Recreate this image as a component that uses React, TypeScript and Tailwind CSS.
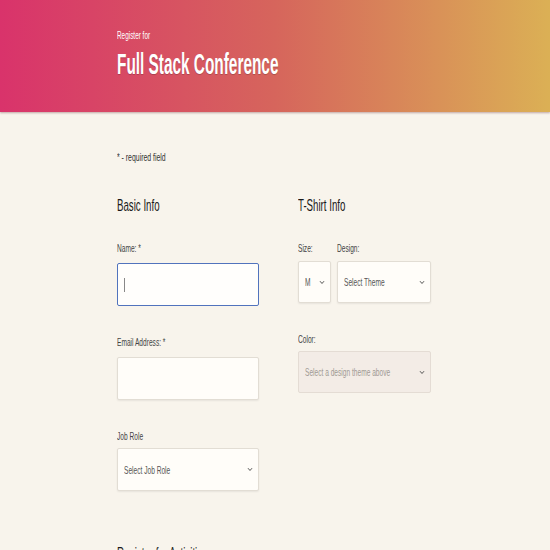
import React from "react";

const font = { fontFamily: '"Liberation Sans", Arial, sans-serif' };

// no condensed face installed, so squeeze Liberation Sans horizontally
const T = ({ children, s = "scale-x-[0.6]" }: { children: React.ReactNode; s?: string }) => (
  <span className={`inline-block origin-left whitespace-nowrap ${s}`}>{children}</span>
);

const Chevron = () => (
  <svg width="6" height="5" viewBox="0 0 6 5" className="shrink-0">
    <path d="M1 1.2l2 2.3 2-2.3" fill="none" stroke="#555" strokeWidth="1" />
  </svg>
);

const Label = ({ children, mb }: { children: React.ReactNode; mb: string }) => (
  <div className={`h-[12px] text-[11px] leading-[12px] text-[#444] ${mb}`}>
    <T>{children}</T>
  </div>
);

const Select = ({ text, w, disabled }: { text: string; w: string; disabled?: boolean }) => (
  <div
    className={`${w} h-[42px] flex items-center pl-[6px] pr-[5px] border rounded-[2px] ${
      disabled
        ? "bg-[#f3ece6] border-[#e4dcd4] text-[#a09a94]"
        : "bg-[#fffdf9] border-[#e2ddd4] text-[#555] shadow-[0_1px_2px_rgba(0,0,0,0.07)]"
    }`}
  >
    <div className="flex-1 min-w-0 text-[11px] leading-[12px]">
      <T>{text}</T>
    </div>
    <Chevron />
  </div>
);

export default function App() {
  return (
    <div className="min-h-[550px] bg-[#f8f4ec]" style={font}>
      <header className="h-[112px] bg-[linear-gradient(90deg,#d9336b,#d6655c_50%,#dbb055)] shadow-[0_1px_2px_rgba(90,20,30,0.35)]">
        <div className="w-[316px] mx-auto pt-[30px] text-white">
          <div className="text-[10px] leading-[12px]">
            <T s="scale-x-[0.64]">Register for</T>
          </div>
          <h1 className="text-[29px] leading-[34px] font-bold mt-[5px] [text-shadow:0_1px_1px_rgba(0,0,0,0.2)]">
            <T s="scale-x-[0.53]">Full Stack Conference</T>
          </h1>
        </div>
      </header>
      <main className="w-[316px] mx-auto pt-[40px]">
        <p className="h-[12px] text-[10px] leading-[12px] text-[#333]">
          <T s="scale-x-[0.69]">* - required field</T>
        </p>
        <div className="grid grid-cols-[142px_133px] gap-x-[39px] mt-[32px]">
          <section>
            <h2 className="h-[20px] text-[17px] leading-[20px] text-[#1a1a1a] mb-[26px]">
              <T s="scale-x-[0.57]">Basic Info</T>
            </h2>
            <Label mb="mb-[9px]">Name: *</Label>
            <div className="w-[142px] h-[43px] border border-[#5173bd] rounded-[2px] bg-[#fffefc] flex items-center pl-[6px]">
              <span className="w-px h-[14px] bg-[#888]" />
            </div>
            <div className="mt-[30px]">
              <Label mb="mb-[9px]">Email Address: *</Label>
              <div className="w-[142px] h-[43px] border border-[#e2ddd4] rounded-[2px] bg-[#fffdf9] shadow-[0_1px_2px_rgba(0,0,0,0.07)]" />
            </div>
            <div className="mt-[30px]">
              <Label mb="mb-[6px]">Job Role</Label>
              <Select text="Select Job Role" w="w-[142px] h-[43px]" />
            </div>
            <h2 className="h-[20px] text-[17px] leading-[20px] text-[#1a1a1a] mt-[53px]">
              <T s="scale-x-[0.57]">Register for Activities</T>
            </h2>
          </section>
          <section>
            <h2 className="h-[20px] text-[17px] leading-[20px] text-[#1a1a1a] mb-[26px]">
              <T s="scale-x-[0.57]">T-Shirt Info</T>
            </h2>
            <div className="flex gap-[6px]">
              <div>
                <Label mb="mb-[7px]">Size:</Label>
                <Select text="M" w="w-[33px]" />
              </div>
              <div>
                <Label mb="mb-[7px]">Design:</Label>
                <Select text="Select Theme" w="w-[94px]" />
              </div>
            </div>
            <div className="mt-[30px]">
              <Label mb="mb-[6px]">Color:</Label>
              <Select text="Select a design theme above" w="w-[133px]" disabled />
            </div>
          </section>
        </div>
      </main>
    </div>
  );
}
